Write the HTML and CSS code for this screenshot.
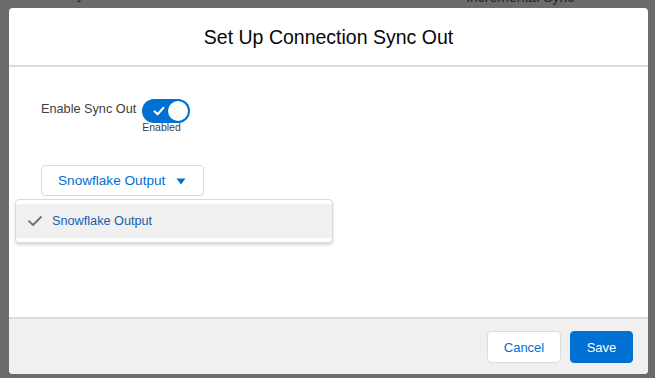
FILE: index.html
```html
<!DOCTYPE html>
<html lang="en">
<head>
    <meta charset="UTF-8">
    <meta name="viewport" content="width=device-width, initial-scale=1.0">
    <title>Set Up Connection Sync Out</title>
    <link rel="stylesheet" href="styles.css">
</head>
<body>
    <div class="behind">
        <div class="behind-row">
            <span class="behind-left">Daily</span>
            <span class="behind-right">Incremental Sync</span>
        </div>
    </div>

    <div class="modal">
        <div class="modal-header">
            <h2>Set Up Connection Sync Out</h2>
        </div>

        <div class="modal-body">
            <div class="toggle-row">
                <span class="toggle-label">Enable Sync Out</span>
                <div class="toggle-group">
                    <div class="toggle on">
                        <svg class="toggle-check" width="12" height="10" viewBox="0 0 12 10">
                            <path d="M1.5 5.2 L4.6 8.2 L10.5 1.8" fill="none" stroke="#fff" stroke-width="2" stroke-linecap="round" stroke-linejoin="round"/>
                        </svg>
                        <span class="toggle-knob"></span>
                    </div>
                    <span class="toggle-state">Enabled</span>
                </div>
            </div>

            <div class="dropdown">
                <button class="dropdown-btn">
                    Snowflake Output
                    <svg width="10" height="7" viewBox="0 0 10 7">
                        <path d="M0.5 0.5 H9.5 L5 6.5 Z" fill="#0070d2"/>
                    </svg>
                </button>
                <div class="dropdown-menu">
                    <div class="menu-item selected">
                        <svg class="menu-check" width="14" height="10" viewBox="0 0 14 10">
                            <path d="M1 5.2 L5 9 L13 1" fill="none" stroke="#706e6b" stroke-width="1.8" stroke-linecap="round" stroke-linejoin="round"/>
                        </svg>
                        <span>Snowflake Output</span>
                    </div>
                </div>
            </div>
        </div>

        <div class="modal-footer">
            <button class="btn btn-neutral">Cancel</button>
            <button class="btn btn-brand">Save</button>
        </div>
    </div>
</body>
</html>
```

FILE: styles.css
```css
html, body {
    height: 100%;
}
body {
    font-family: "Liberation Sans", Arial, sans-serif;
    margin: 0;
    background-color: #6b6b6b;
    overflow: hidden;
    color: #080707;
}
.behind {
    height: 8px;
    overflow: hidden;
}
.behind-row {
    display: flex;
    align-items: flex-start;
    font-size: 14px;
    line-height: 14px;
    color: #262626;
}
.behind-left {
    margin-left: 53px;
    margin-top: -13px;
}
.behind-right {
    margin-left: 382px;
    margin-top: -10px;
}
.modal {
    margin: 0 7px 0 9px;
    height: 366px;
    background: white;
    border-radius: 4px;
    display: flex;
    flex-direction: column;
    overflow: hidden;
}
.modal-header {
    height: 57px;
    border-bottom: 2px solid #dddbda;
    display: flex;
    align-items: center;
    justify-content: center;
}
.modal-header h2 {
    margin: 0;
    font-size: 19.5px;
    font-weight: normal;
    color: #080707;
    padding-top: 2px;
}
.modal-body {
    flex: 1;
    padding: 32px 32px 0;
}
.toggle-row {
    display: flex;
    align-items: flex-start;
    gap: 6px;
}
.toggle-label {
    font-size: 12.7px;
    line-height: 16px;
    padding-top: 2px;
    color: #3e3e3c;
}
.toggle-group {
    display: flex;
    flex-direction: column;
    align-items: flex-start;
}
.toggle {
    width: 48px;
    height: 24px;
    border-radius: 12px;
    background-color: #0070d2;
    display: flex;
    align-items: center;
    justify-content: space-between;
    padding: 0 2px 0 11px;
    box-sizing: border-box;
}
.toggle-knob {
    width: 20px;
    height: 20px;
    border-radius: 50%;
    background: white;
}
.toggle-state {
    font-size: 10.5px;
    line-height: 12px;
    margin-top: -2px;
    color: #3e3e3c;
}
.dropdown {
    position: relative;
    margin-top: 32px;
    width: fit-content;
}
.dropdown-btn {
    height: 31px;
    width: 163px;
    padding: 0 0 0 16px;
    border: 1px solid #dddbda;
    border-radius: 4px;
    background: white;
    color: #0070d2;
    font-family: inherit;
    font-size: 13.6px;
    display: flex;
    align-items: center;
    gap: 11px;
    cursor: pointer;
}
.dropdown-btn svg {
    margin-top: 1px;
}
.dropdown-menu {
    position: absolute;
    left: -26px;
    top: 34px;
    width: 318px;
    background: white;
    border: 1px solid #dddbda;
    border-radius: 4px;
    box-shadow: 0 2px 3px rgba(0,0,0,0.16);
    padding: 4px 0;
    box-sizing: border-box;
}
.menu-item {
    height: 34px;
    display: flex;
    align-items: center;
    padding-left: 12px;
    gap: 10px;
    font-size: 12.7px;
    color: #1560b0;
}
.menu-item.selected {
    background-color: #f0f0f0;
}
.modal-footer {
    border-top: 2px solid #dddbda;
    background-color: #f0f0f0;
    padding: 12px 15px 11px;
    display: flex;
    justify-content: flex-end;
    gap: 9px;
}
.btn {
    height: 32px;
    border-radius: 4px;
    font-family: inherit;
    font-size: 13px;
    cursor: pointer;
}
.btn-neutral {
    width: 74px;
    background: white;
    border: 1px solid #dddbda;
    color: #0070d2;
}
.btn-brand {
    width: 63px;
    background-color: #0070d2;
    border: 1px solid #0070d2;
    color: white;
}
```
